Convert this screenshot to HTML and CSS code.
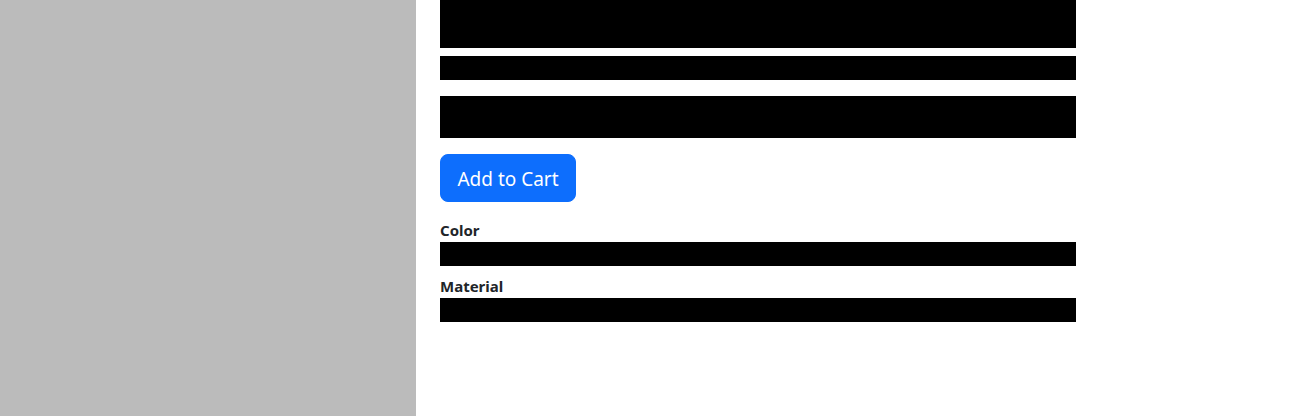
FILE: index.html
```html
<!DOCTYPE html>
<html>
<head>
<meta charset="utf-8">
<link rel="stylesheet" href="styles.css">
</head>
<body>
<div class="page">
  <div class="media"></div>
  <div class="details">
    <div class="redact title"></div>
    <div class="redact price"></div>
    <div class="redact desc"></div>
    <button class="btn-cart">Add to Cart</button>
    <div class="field">
      <div class="label">Color</div>
      <div class="redact value"></div>
    </div>
    <div class="field">
      <div class="label">Material</div>
      <div class="redact value"></div>
    </div>
  </div>
</div>
</body>
</html>
```
FILE: styles.css
```css
html, body {
  margin: 0;
  padding: 0;
  background: #fff;
  font-family: "Segoe UI", "Noto Sans", "Open Sans", sans-serif;
  color: #212529;
}
.page {
  display: flex;
  height: 416px;
}
.media {
  width: 416px;
  flex: none;
  background: #bbbbbb;
}
.details {
  width: 636px;
  padding-left: 24px;
  display: flex;
  flex-direction: column;
  align-items: flex-start;
}
.redact {
  background: #000;
  width: 636px;
}
.title { height: 48px; }
.price { height: 24px; margin-top: 8px; }
.desc { height: 42px; margin-top: 16px; }
.btn-cart {
  margin-top: 16px;
  height: 48px;
  width: 136px;
  padding: 2px 0 0 0;
  border: 1px solid #0d6efd;
  background: #0d6efd;
  color: #fff;
  border-radius: 8px;
  font-family: inherit;
  font-size: 19px;
  line-height: 30px;
}
.btn-cart + .field { margin-top: 16px; }
.field {
  display: flex;
  flex-direction: column;
}
.field + .field { margin-top: 8px; }
.label {
  font-weight: 700;
  font-size: 15px;
  line-height: 24px;
}
.value { height: 24px; }
```
